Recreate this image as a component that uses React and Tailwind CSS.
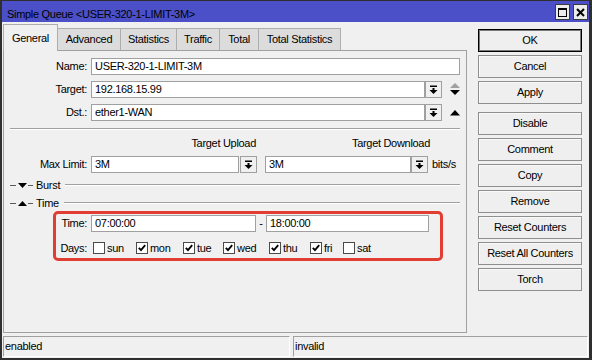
import React from "react";

const TABS = [
  { label: "General", w: "w-[55px]", active: true },
  { label: "Advanced", w: "w-[64px]" },
  { label: "Statistics", w: "w-[57px]" },
  { label: "Traffic", w: "w-[44px]" },
  { label: "Total", w: "w-[40px]" },
  { label: "Total Statistics", w: "w-[83px]" },
];

const BUTTONS = [
  { label: "OK", def: true },
  { label: "Cancel" },
  { label: "Apply" },
  { label: "Disable", gap: true },
  { label: "Comment" },
  { label: "Copy" },
  { label: "Remove" },
  { label: "Reset Counters" },
  { label: "Reset All Counters" },
  { label: "Torch" },
];

const DAYS = [
  { label: "sun", on: false, w: "w-[43px]" },
  { label: "mon", on: true, w: "w-[47px]" },
  { label: "tue", on: true, w: "w-[40px]" },
  { label: "wed", on: true, w: "w-[46px]" },
  { label: "thu", on: true, w: "w-[41px]" },
  { label: "fri", on: true, w: "w-[33px]" },
  { label: "sat", on: false, w: "w-[40px]" },
];

function Field({ className, value }) {
  return (
    <div className={`h-[17px] bg-white border border-[#a0a0a0] px-[3px] flex items-center whitespace-nowrap ${className}`}>
      {value}
    </div>
  );
}

function DropBtn({ className = "" }) {
  return (
    <div className={`w-[17px] h-[17px] border border-[#a0a0a0] bg-[#f0f0f0] flex items-center justify-center ${className}`}>
      <svg width="9" height="9" viewBox="0 0 9 9">
        <rect x="1" y="0.5" width="7" height="1.5" fill="#000" />
        <rect x="3.5" y="3" width="2" height="2" fill="#000" />
        <polygon points="0.5,5 8.5,5 4.5,9" fill="#000" />
      </svg>
    </div>
  );
}

function Row({ label, children, className = "" }) {
  return (
    <div className={`flex items-center h-[17px] ${className}`}>
      <div className="w-[83px] text-right">{label}</div>
      <div className="ml-[4px] flex items-center">{children}</div>
    </div>
  );
}

function Section({ label, open, className = "" }) {
  return (
    <div className={`flex items-center h-[14px] ml-[6px] w-[450px] ${className}`}>
      <div className="w-[6px] h-px bg-[#5a5a5a]" />
      <svg width="9" height="5" viewBox="0 0 9 5" className="ml-[2px]">
        {open ? <polygon points="0,5 9,5 4.5,0" fill="#000" /> : <polygon points="0,0 9,0 4.5,5" fill="#000" />}
      </svg>
      <div className="ml-[1px] w-[5px] h-px bg-[#5a5a5a]" />
      <span className="ml-[3px]">{label}</span>
      <div className="ml-[5px] flex-1 border-t border-[#a0a0a0] border-b border-b-white" />
    </div>
  );
}

function Check({ on }) {
  return (
    <div className="w-[12px] h-[12px] bg-white border border-[#4a4a4a] flex items-center justify-center">
      {on && (
        <svg width="8" height="8" viewBox="0 0 8 8">
          <polyline points="0.8,3.8 3,6.2 7.2,1.2" fill="none" stroke="#000" strokeWidth="1.8" />
        </svg>
      )}
    </div>
  );
}

export default function App() {
  return (
    <div className="w-[592px] h-[360px] bg-[#f0f0f0] border-t border-l-2 border-r-[3px] border-b-2 border-[#2f2f2f] flex flex-col overflow-hidden text-[11px] tracking-[-0.3px] text-black font-['Liberation_Sans',Arial,sans-serif]">
      {/* Title bar */}
      <div className="h-[21px] shrink-0 bg-[#4b50c8] flex items-center justify-between pl-[5px] pr-[1px]">
        <span className="text-black pt-[5px]">Simple Queue &lt;USER-320-1-LIMIT-3M&gt;</span>
        <div className="flex gap-[3px] pt-[1px]">
          <div className="w-[15px] h-[16px] bg-[#ececec] border border-[#3a3a3a] flex items-center justify-center">
            <svg width="9" height="9" viewBox="0 0 9 9">
              <rect x="0.5" y="0.5" width="8" height="8" fill="none" stroke="#000" />
              <rect x="0" y="0" width="9" height="2" fill="#000" />
            </svg>
          </div>
          <div className="w-[15px] h-[16px] bg-[#ececec] border border-[#3a3a3a] flex items-center justify-center">
            <svg width="9" height="9" viewBox="0 0 9 9">
              <path d="M1 1 L8 8 M8 1 L1 8" stroke="#000" strokeWidth="2" />
            </svg>
          </div>
        </div>
      </div>

      {/* Body */}
      <div className="flex h-[311px] shrink-0">
        <div className="ml-[1px] w-[464px] flex flex-col">
          {/* Tabs */}
          <div className="h-[28px] flex items-end">
            {TABS.map((t, i) => (
              <div
                key={t.label}
                className={`${t.w} flex items-center justify-center border border-[#adadad] ${i > 0 ? "-ml-px" : ""} ${
                  t.active
                    ? "h-[27px] -mb-px border-b-0 bg-[#f0f0f0] relative z-10"
                    : "h-[22px] border-b-0 bg-[#dcdcdc]"
                }`}
              >
                {t.label}
              </div>
            ))}
          </div>

          {/* Panel */}
          <div className="h-[283px] border border-[#a0a0a0] bg-[#f0f0f0] pt-[7px] flex flex-col">
            <Row label="Name:">
              <Field className="w-[369px]" value="USER-320-1-LIMIT-3M" />
            </Row>
            <Row label="Target:" className="mt-[6px]">
              <Field className="w-[334px]" value="192.168.15.99" />
              <DropBtn />
              <svg width="10" height="13" viewBox="0 0 10 13" className="ml-[8px]">
                <polygon points="0,5 10,5 5,0" fill="#a0a0a0" />
                <polygon points="0,7 10,7 5,12" fill="#000" />
              </svg>
            </Row>
            <Row label="Dst.:" className="mt-[6px]">
              <Field className="w-[334px]" value="ether1-WAN" />
              <DropBtn />
              <svg width="10" height="6" viewBox="0 0 10 6" className="ml-[8px]">
                <polygon points="0,5.5 10,5.5 5,0" fill="#000" />
              </svg>
            </Row>

            <div className="mt-[7px] ml-[6px] w-[450px] border-t border-[#a0a0a0] border-b border-b-white" />

            <div className="mt-[6px] h-[14px] flex items-center">
              <div className="w-[252px] text-right">Target Upload</div>
              <div className="w-[174px] text-right">Target Download</div>
            </div>

            <Row label="Max Limit:" className="mt-[6px]">
              <Field className="w-[148px]" value="3M" />
              <DropBtn className="ml-[1px]" />
              <Field className="ml-[8px] w-[146px]" value="3M" />
              <DropBtn />
              <span className="ml-[4px]">bits/s</span>
            </Row>

            <Section label="Burst" open={false} className="mt-[5px]" />
            <Section label="Time" open className="mt-[4px]" />

            {/* Highlighted time box */}
            <div className="mt-px ml-[49px] w-[390px] h-[50px] border-[3px] border-[#e23d33] rounded-[5px] pt-px flex flex-col">
              <div className="flex items-center h-[17px]">
                <div className="w-[31px] text-right">Time:</div>
                <Field className="ml-[4px] w-[165px]" value="07:00:00" />
                <span className="w-[10px] text-center">-</span>
                <Field className="w-[163px]" value="18:00:00" />
              </div>
              <div className="mt-[10px] flex items-center h-[12px]">
                <div className="w-[31px] text-right">Days:</div>
                <div className="ml-[6px] flex items-center">
                  {DAYS.map((d) => (
                    <div key={d.label} className={`${d.w} flex items-center gap-[2px]`}>
                      <Check on={d.on} />
                      <span>{d.label}</span>
                    </div>
                  ))}
                </div>
              </div>
            </div>
          </div>
        </div>

        {/* Buttons */}
        <div className="ml-[11px] w-[104px] pt-[7px] flex flex-col">
          {BUTTONS.map((b, i) => (
            <div
              key={b.label}
              className={`h-[23px] flex items-center justify-center bg-[#efefef] ${i > 0 ? (b.gap ? "mt-[8px]" : "mt-[3px]") : ""} ${
                b.def
                  ? "border border-black shadow-[inset_0_0_0_1px_#7a7a7a]"
                  : "border border-[#8e8e8e] shadow-[inset_1px_1px_0_#fafafa]"
              }`}
            >
              {b.label}
            </div>
          ))}
        </div>
      </div>

      {/* Status bar */}
      <div className="mt-[3px] h-[21px] shrink-0 flex gap-[3px] ml-[1px]">
        <div className="w-[287px] border border-[#a0a0a0] border-b-white border-r-white pl-px flex items-center">enabled</div>
        <div className="w-[295px] border border-[#a0a0a0] border-b-white border-r-white pl-px flex items-center">invalid</div>
      </div>
    </div>
  );
}
